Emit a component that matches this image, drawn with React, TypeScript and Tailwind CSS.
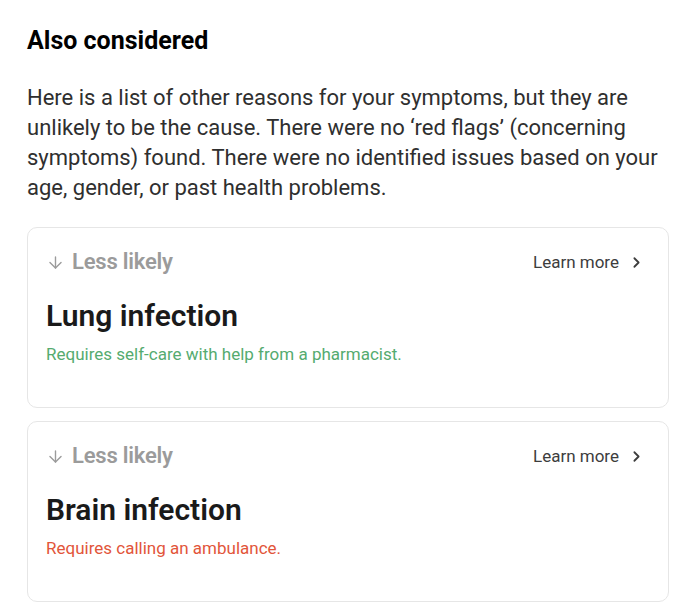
import React from 'react';
import { ArrowDown, ChevronRight } from 'lucide-react';

type Condition = {
  name: string;
  care: string;
  tone: 'green' | 'red';
};

const conditions: Condition[] = [
  { name: 'Lung infection', care: 'Requires self-care with help from a pharmacist.', tone: 'green' },
  { name: 'Brain infection', care: 'Requires calling an ambulance.', tone: 'red' },
];

function ConditionCard({ item }: { item: Condition }) {
  return (
    <div className="h-[181px] rounded-[10px] border border-[#e6e6e6] bg-white pl-[18px] pr-[23px] pt-[20px]">
      <div className="flex items-center justify-between">
        <div className="flex items-center gap-[7px] text-[#9b9b9b]">
          <ArrowDown className="h-[19px] w-[19px]" strokeWidth={1.75} />
          <span className="text-[22px] font-semibold leading-[28px] tracking-[-0.01em]">Less likely</span>
        </div>
        <a className="flex items-center gap-[9px] text-[17px] leading-[28px] text-[#3d3d3d]" href="#">
          Learn more
          <ChevronRight className="h-[17px] w-[17px]" strokeWidth={2.5} />
        </a>
      </div>
      <h3 className="mt-[22px] text-[30px] font-semibold leading-[36px] text-[#1a1a1a]">{item.name}</h3>
      <p
        className={
          item.tone === 'green'
            ? 'mt-[8px] text-[17px] leading-[24px] text-[#55ab6f]'
            : 'mt-[8px] text-[17px] leading-[24px] text-[#e2553a]'
        }
      >
        {item.care}
      </p>
    </div>
  );
}

export default function App() {
  return (
    <div className="min-h-screen bg-white pl-[27px] pr-[21px] pt-[25px] font-['Roboto',sans-serif]">
      <h2 className="text-[25px] font-bold leading-[32px] text-black">Also considered</h2>
      <p className="mt-[26px] w-[640px] text-[22px] leading-[30px] text-[#2f2f2f]">
        Here is a list of other reasons for your symptoms, but they are unlikely to be the cause. There were no ‘red flags’ (concerning symptoms) found. There were no identified issues based on your age, gender, or past health problems.
      </p>
      <div className="mt-[24px] flex flex-col gap-[13px]">
        {conditions.map((c) => (
          <ConditionCard key={c.name} item={c} />
        ))}
      </div>
    </div>
  );
}
